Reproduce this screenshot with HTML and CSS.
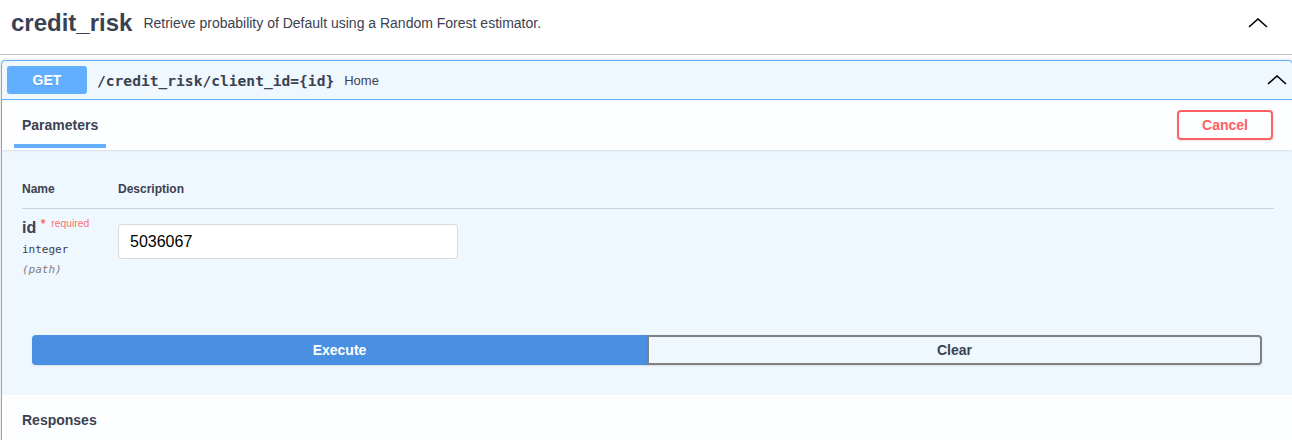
FILE: index.html
```html
<!DOCTYPE html>
<html>
<head>
<meta charset="utf-8">
<link rel="stylesheet" href="styles.css">
</head>
<body>
<section class="tag">
  <h3 class="tag-title">
    <span class="tag-name">credit_risk</span>
    <small class="tag-desc">Retrieve probability of Default using a Random Forest estimator.</small>
  </h3>
  <svg class="chev chev-tag" width="20" height="10" viewBox="0 0 20 10"><polyline points="1,9 10,1 19,9" fill="none" stroke="#000" stroke-width="1.6"/></svg>
</section>

<div class="opblock">
  <div class="summary">
    <span class="method">GET</span>
    <span class="path">/credit_risk/client_id={id}</span>
    <span class="summary-desc">Home</span>
    <svg class="chev chev-op" width="20" height="10" viewBox="0 0 20 10"><polyline points="1,9 10,1 19,9" fill="none" stroke="#000" stroke-width="1.6"/></svg>
  </div>

  <div class="section-header">
    <h4 class="tab"><span class="tab-label">Parameters</span></h4>
    <button class="btn-cancel">Cancel</button>
  </div>

  <div class="table-container">
    <div class="ptable">
      <div class="prow phead">
        <div class="col-name">Name</div>
        <div class="col-desc">Description</div>
      </div>
      <div class="prow pbody">
        <div class="col-name">
          <div class="pname">id <span class="star">*</span><span class="req">required</span></div>
          <div class="ptype">integer</div>
          <div class="pin">(path)</div>
        </div>
        <div class="col-desc">
          <input class="pinput" type="text" value="5036067">
        </div>
      </div>
    </div>
  </div>

  <div class="btn-group">
    <button class="btn-exec">Execute</button>
    <button class="btn-clear">Clear</button>
  </div>

  <div class="section-header responses">
    <h4 class="resp-title">Responses</h4>
  </div>
</div>
</body>
</html>
```

FILE: styles.css
```css
html, body {
  margin: 0;
  padding: 0;
  background: #fff;
  overflow: hidden;
  font-family: "Liberation Sans", Arial, sans-serif;
  color: #3b4151;
}

.tag {
  display: flex;
  align-items: center;
  height: 35px;
  padding: 5px 24px 14px 10px;
  border-bottom: 1px solid rgba(59, 65, 81, 0.3);
}

.tag-title {
  flex: 1;
  display: flex;
  align-items: center;
  margin: 0;
}

.tag-name {
  font-size: 24px;
  font-weight: bold;
  color: #3b4151;
  padding-left: 1px;
}

.tag-desc {
  font-size: 14px;
  font-weight: normal;
  padding: 0 10px 0 11px;
  color: #3b4151;
}

.chev {
  display: block;
  flex: none;
}

.opblock {
  box-sizing: border-box;
  width: 1292px;
  margin: 5px 0 0 1px;
  border: 1px solid #61affe;
  border-radius: 4px;
  background: #eff7ff;
  box-shadow: 0 0 3px rgba(0, 0, 0, 0.19);
}

.summary {
  display: flex;
  align-items: center;
  padding: 5px;
  border-bottom: 1px solid #61affe;
}

.method {
  box-sizing: border-box;
  min-width: 80px;
  padding: 6px 0;
  line-height: 16px;
  border-radius: 3px;
  background: #61affe;
  color: #fff;
  font-size: 14px;
  font-weight: bold;
  text-align: center;
  text-shadow: 0 1px 0 rgba(0, 0, 0, 0.1);
}

.path {
  padding: 0 10px;
  font-family: "DejaVu Sans Mono", monospace;
  font-size: 14.6px;
  font-weight: bold;
  color: #3b4151;
}

.summary-desc {
  flex: 1;
  font-size: 13px;
  color: #3b4151;
}

.chev-op {
  margin-top: -1px;
}

.section-header {
  display: flex;
  align-items: center;
  box-sizing: border-box;
  min-height: 50px;
  padding: 8px 19px 8px 20px;
  background: rgba(255, 255, 255, 0.8);
  box-shadow: 0 1px 2px rgba(0, 0, 0, 0.1);
}

.tab {
  flex: 1;
  margin: 0;
  font-size: 14px;
  font-weight: bold;
  line-height: 16px;
}

.tab-label {
  position: relative;
  display: inline-block;
}

.tab-label::after {
  content: "";
  position: absolute;
  left: -8px;
  right: -8px;
  bottom: -15px;
  height: 4px;
  background: #61affe;
}

.btn-cancel {
  box-sizing: border-box;
  height: 30px;
  padding: 5px 23px;
  margin-top: -1px;
  border: 2px solid #ff6060;
  border-radius: 4px;
  background: transparent;
  color: #ff6060;
  font-family: "Liberation Sans", Arial, sans-serif;
  font-size: 14px;
  font-weight: bold;
  box-shadow: 0 1px 2px rgba(0, 0, 0, 0.1);
}

.table-container {
  padding: 20px 18px 20px 20px;
}

.prow {
  display: flex;
}

.col-name {
  width: 96px;
  flex: none;
}

.col-desc {
  flex: 1;
}

.phead {
  padding: 12px 0;
  line-height: 14px;
  font-size: 12px;
  font-weight: bold;
  border-bottom: 1px solid rgba(59, 65, 81, 0.2);
}

.pbody {
  height: 76px;
  box-sizing: border-box;
  padding-top: 10px;
}

.pname {
  font-size: 16px;
  font-weight: bold;
  line-height: 18px;
  white-space: nowrap;
}

.star {
  position: relative;
  top: -5px;
  font-size: 12px;
  color: rgba(255, 0, 0, 0.6);
}

.req {
  position: relative;
  top: -6px;
  margin-left: 6px;
  font-size: 10.3px;
  font-weight: normal;
  color: rgba(255, 0, 0, 0.6);
}

.ptype {
  margin-top: 5px;
  font-family: "DejaVu Sans Mono", monospace;
  font-size: 11px;
  line-height: 12px;
  color: #3b4151;
}

.pin {
  margin-top: 8px;
  font-family: "DejaVu Sans Mono", monospace;
  font-size: 11px;
  line-height: 12px;
  font-style: italic;
  color: #808080;
}

.pinput {
  box-sizing: border-box;
  display: block;
  width: 340px;
  height: 35px;
  margin: 5px 0 0;
  padding: 8px 11px;
  border: 1px solid #d9d9d9;
  border-radius: 4px;
  background: #fff;
  font-family: "Liberation Sans", Arial, sans-serif;
  font-size: 16px;
  color: #000;
  outline: none;
}

.btn-group {
  display: flex;
  padding: 30px;
}

.btn-exec,
.btn-clear {
  box-sizing: border-box;
  width: 50%;
  height: 30px;
  padding: 5px 10px;
  font-family: "Liberation Sans", Arial, sans-serif;
  font-size: 14px;
  font-weight: bold;
  box-shadow: 0 1px 2px rgba(0, 0, 0, 0.1);
}

.btn-exec {
  border: 2px solid #4990e2;
  border-radius: 4px 0 0 4px;
  background: #4990e2;
  color: #fff;
}

.btn-clear {
  border: 2px solid #808080;
  border-radius: 0 4px 4px 0;
  background: transparent;
  color: #3b4151;
}

.responses {
  box-shadow: none;
}

.resp-title {
  margin: 0;
  font-size: 14px;
  font-weight: bold;
}
```
